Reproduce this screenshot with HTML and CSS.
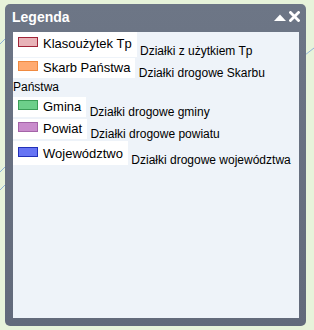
FILE: index.html
```
<!DOCTYPE HTML>
<html lang=pl>
	<head>
		<meta charset="UTF-8">
		<link rel="stylesheet" href="styles.css">
	</head>
	<body>
		<svg class="map-lines" width="314" height="330" viewBox="0 0 314 330">
			<path d="M0 44 L6 38" />
			<path d="M0 172 L6 166" />
			<path d="M0 190 L6 184" />
			<path d="M305 55 L314 48" />
		</svg>

		<div class="panel">
			<div class="panel-head">
				<span class="panel-title">Legenda</span>
				<span class="panel-tools">
					<svg width="12" height="7" viewBox="0 0 12 7"><path d="M0 7 L6 0.5 L12 7 Z" fill="#fff"/></svg>
					<svg width="11" height="11" viewBox="0 0 11 11"><path d="M1.5 1.5 L9.5 9.5 M9.5 1.5 L1.5 9.5" stroke="#fff" stroke-width="2.8" stroke-linecap="square"/></svg>
				</span>
			</div>

			<div class="panel-body">
				<div class="row"><span class="key first"><i class="swatch tp"></i>Klasoużytek Tp</span> <span class="desc">Działki z użytkiem Tp</span></div>
				<div class="row"><span class="key"><i class="swatch skarb"></i>Skarb Państwa</span> <span class="desc">Działki drogowe Skarbu Państwa</span></div>
				<div class="row gap"><span class="key"><i class="swatch gmina"></i>Gmina</span> <span class="desc">Działki drogowe gminy</span></div>
				<div class="row"><span class="key"><i class="swatch powiat"></i>Powiat</span> <span class="desc">Działki drogowe powiatu</span></div>
				<div class="row"><span class="key last"><i class="swatch woj"></i>Województwo</span> <span class="desc">Działki drogowe województwa</span></div>
			</div>
		</div>
	</body>
</html>
```
FILE: styles.css
```
html {
	font-family: "Liberation Sans", Arial, sans-serif;
}
body {
	margin: 0;
	width: 314px;
	height: 330px;
	background: #e7f3da;
	overflow: hidden;
}

/* the map under the panel */
.map-lines {
	position: absolute;
	left: 0;
	top: 0;
}
.map-lines path {
	stroke: #8fb3d8;
	stroke-width: 1;
	fill: none;
}

.panel {
	position: relative;
	margin: 4px 0 0 5px;
	width: 301px;
	height: 322px;
	box-sizing: border-box;
	background: linear-gradient(#6d7686, #626a7b);
	border-radius: 5px;
	padding: 0 7px 8px 8px;
	display: flex;
	flex-direction: column;
}

.panel-head {
	height: 28px;
	display: flex;
	align-items: center;
	justify-content: space-between;
}
.panel-title {
	color: #fff;
	font-weight: bold;
	font-size: 14px;
	margin-left: -1px;
	margin-top: -3px;
}
.panel-tools {
	display: flex;
	align-items: center;
	gap: 3px;
	margin-right: -1px;
	margin-top: -4px;
}
.panel-tools svg { display: block }
.panel-tools svg:first-child { margin-top: 2px }

.panel-body {
	flex: 1;
	background: #eef3f9;
	font-size: 12px;
	color: #000;
}

.row { line-height: normal }
.row.gap { margin-top: 3px }

/* overflow:hidden puts the key's baseline at its bottom edge,
   so the description sits on the bottom of the white box */
.key {
	display: inline-block;
	overflow: hidden;
	height: 20px;
	line-height: 20px;
	padding: 0 5px;
	background: #fff;
	font-size: 13px;
	vertical-align: -1px;
}
.key.first { height: 25px; line-height: 24px; vertical-align: -2px; }
.key.last { height: 24px; line-height: 25px; }

.swatch {
	display: inline-block;
	width: 20px;
	height: 10px;
	box-sizing: border-box;
	border: 1px solid;
	margin-right: 5px;
	vertical-align: 1px;
}
.tp { background: #e8b3b8; border-color: #a02438; }
.skarb { background: #ffaa70; border-color: #f08a40; }
.gmina { background: #6dcf8a; border-color: #3c9e58; }
.powiat { background: #c98ccc; border-color: #a464a8; }
.woj { background: #6674f4; border-color: #2230b8; }
```
